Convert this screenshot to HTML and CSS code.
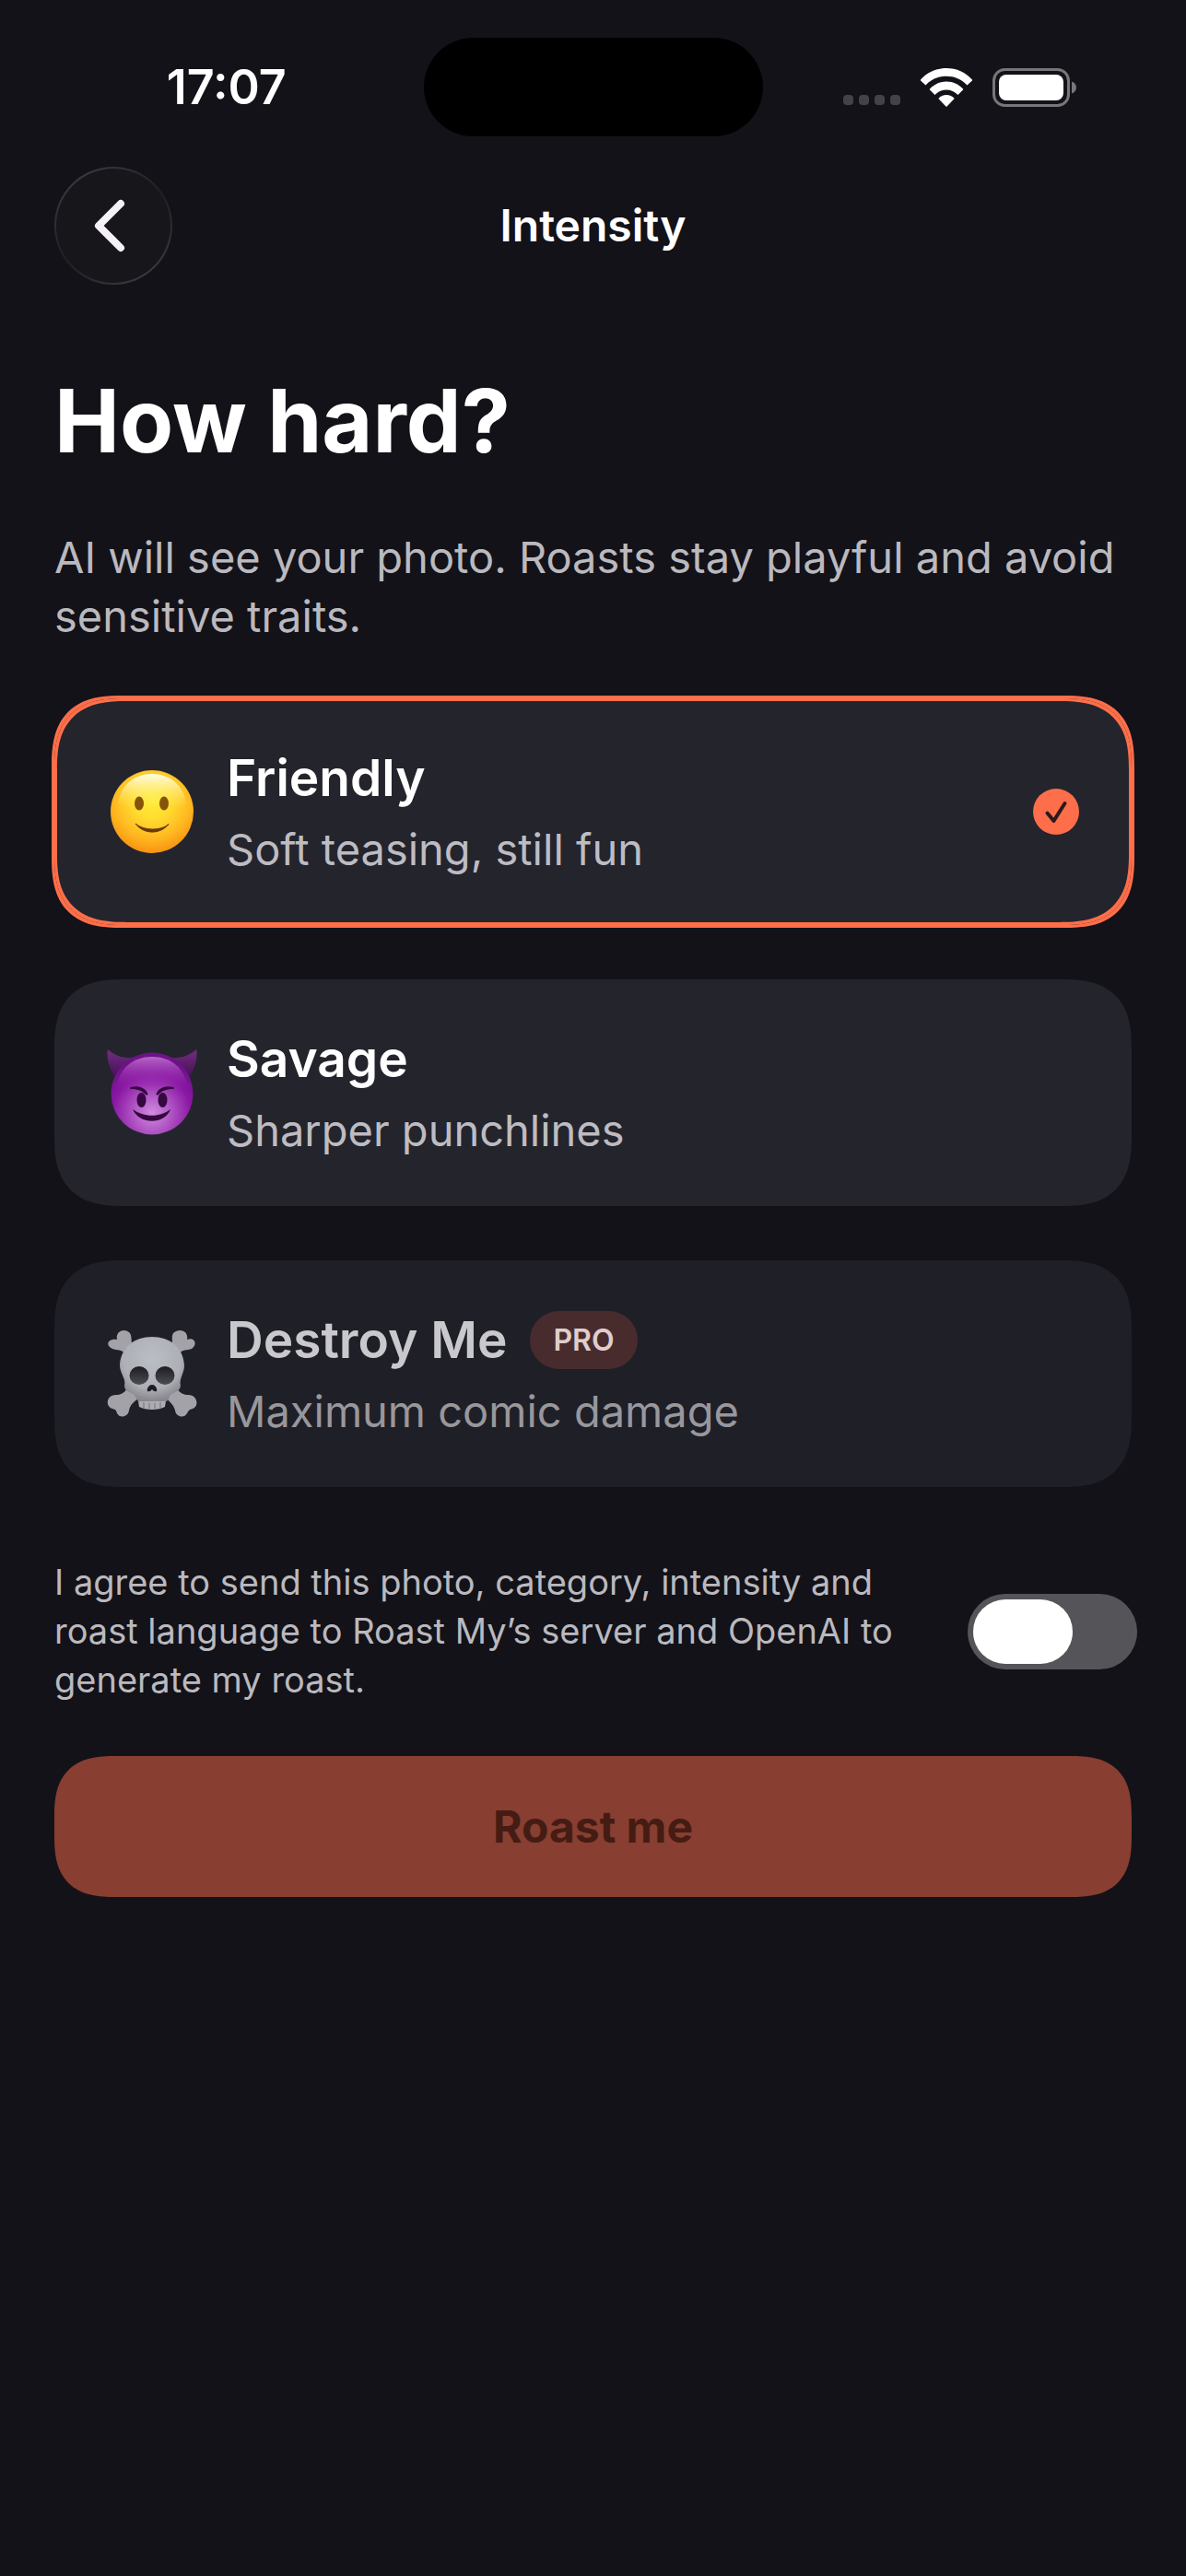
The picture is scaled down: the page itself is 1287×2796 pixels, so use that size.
FILE: index.html
```html
<!DOCTYPE html>
<html lang="en">
<head>
<meta charset="utf-8">
<meta name="viewport" content="width=device-width, initial-scale=1">
<title>Intensity</title>
<link rel="stylesheet" href="styles.css">
</head>
<body>
<div class="status">
  <time class="status-time">17:07</time>
  <div class="island"></div>
  <div class="status-icons">
    <span class="signal"><i></i><i></i><i></i><i></i></span>
    <svg class="wifi" viewBox="0 0 56 42" aria-hidden="true">
      <g fill="#fff">
        <path d="M28 0C39 0 49 4.500 56 12.500Q56.500 13 56 13.500L50.500 18.500C44.500 12 36.500 8.800 28 8.800S11.500 12 5.500 18.500L0 13.500Q-.5 13 0 12.500C7 4.500 17 0 28 0Z"/>
        <path d="M28 14.500C35.500 14.500 41.500 17.500 46 22.500Q46.500 23 46 23.500L40.500 29C37 25.500 32.800 23.500 28 23.500S19 25.500 15.500 29L10 23.500Q9.500 23 10 22.500C14.500 17.500 20.500 14.500 28 14.500Z"/>
        <path d="M28 29C31.500 29 34.200 30.200 36.300 32.500Q36.700 33 36.200 33.600L28.600 41.500Q28 42 27.400 41.500L19.800 33.600Q19.300 33 19.700 32.500C21.800 30.200 24.500 29 28 29Z"/>
      </g>
    </svg>
    <svg class="battery" viewBox="0 0 92 42" aria-hidden="true">
      <rect x="1.500" y="1.500" width="81" height="39" rx="12" fill="none" stroke="#77767b" stroke-width="3"/>
      <rect x="7" y="7" width="70" height="28" rx="8" fill="#fff"/>
      <path d="M86 14.500C89 15.500 91 18 91 21S89 26.500 86 27.500Z" fill="#77767b"/>
    </svg>
  </div>
</div>
<header class="nav">
  <button class="back" type="button" aria-label="Back">
    <svg viewBox="0 0 40 60" aria-hidden="true"><path d="M32 6L8 30L32 54" fill="none" stroke="#f4f2f8" stroke-width="8" stroke-linecap="round" stroke-linejoin="round"/></svg>
  </button>
  <p class="nav-title">Intensity</p>
</header>
<main class="content">
  <h1>How hard?</h1>
  <p class="intro">AI will see your photo. Roasts stay playful and avoid sensitive traits.</p>
  <div class="options">
    <button class="option selected" type="button" aria-pressed="true">
      <svg class="emoji" viewBox="0 0 98 98" aria-hidden="true">
        <defs>
          <radialGradient id="sunGlow" cx=".5" cy=".36" r=".66"><stop offset="0" stop-color="#ffec38"/><stop offset=".35" stop-color="#ffdc30"/><stop offset=".7" stop-color="#ffb820"/><stop offset="1" stop-color="#f58f11"/></radialGradient>
          <linearGradient id="sunTop" x1="0" y1="0" x2="0" y2="1"><stop offset="0" stop-color="#fffde8"/><stop offset="1" stop-color="#ffee58" stop-opacity="0"/></linearGradient>
        </defs>
        <circle cx="49" cy="49" r="45" fill="url(#sunGlow)"/>
        <path d="M12 40C15 20 30 8 49 8S83 20 86 40C74 48 24 48 12 40Z" fill="url(#sunTop)"/>
        <ellipse cx="35" cy="40" rx="5" ry="7.500" fill="#85540a"/>
        <ellipse cx="62" cy="40" rx="5" ry="7.500" fill="#85540a"/>
        <path d="M31 62C40 74 58 74 67 62.500C59 70 40 70 31 62Z" fill="#6b3a08" stroke="#6b3a08" stroke-width="1" stroke-linejoin="round"/>
      </svg>
      <span class="option-text">
        <span class="option-title">Friendly</span>
        <span class="option-note">Soft teasing, still fun</span>
      </span>
      <svg class="tick" viewBox="0 0 50 50" aria-hidden="true"><circle cx="25" cy="25" r="25" fill="#ff6e4a"/><path d="M15.500 26.500L22.500 35L34.500 16" fill="none" stroke="#2b1a1c" stroke-width="4" stroke-linecap="round" stroke-linejoin="round"/></svg>
    </button>
    <button class="option" type="button" aria-pressed="false">
      <svg class="emoji" viewBox="0 0 98 98" aria-hidden="true">
        <defs>
          <radialGradient id="impBase" cx=".5" cy=".74" r=".66"><stop offset="0" stop-color="#d08be0"/><stop offset=".35" stop-color="#b055c4"/><stop offset=".72" stop-color="#8a18a4"/><stop offset="1" stop-color="#6f1289"/></radialGradient>
          <linearGradient id="impTop" x1="0" y1="0" x2="0" y2="1"><stop offset="0" stop-color="#b968c8"/><stop offset="1" stop-color="#8e0fa8" stop-opacity="0"/></linearGradient>
          <linearGradient id="impHorn" x1="0" y1="0" x2="0" y2="1"><stop offset="0" stop-color="#6f2f7d"/><stop offset="1" stop-color="#4b0f5c"/></linearGradient>
        </defs>
        <path d="M1 2C9 9 18 12 29 11L8 31C2 21-1 10 1 2Z" fill="url(#impHorn)"/>
        <path d="M97 2C89 9 80 12 69 11L90 31C96 21 99 10 97 2Z" fill="url(#impHorn)"/>
        <circle cx="49" cy="50" r="44.500" fill="url(#impBase)"/>
        <path d="M11 41C14 22 29 10 49 10S84 22 87 41C75 50 23 50 11 41Z" fill="url(#impTop)"/>
        <g fill="#35083f">
          <path d="M26 43C32 41 42 43 44.500 50.500Q44 52.500 42 51C38 46.500 32 45 26 45Q24 44 26 43Z"/>
          <path d="M72 43C66 41 56 43 53.500 50.500Q54 52.500 56 51C60 46.500 66 45 72 45Q74 44 72 43Z"/>
          <ellipse cx="37.500" cy="57" rx="5" ry="8"/>
          <ellipse cx="60.500" cy="57" rx="5" ry="8"/>
          <path d="M28 67C40 76 58 76 69 67C63 84 35 84 28 67Z"/>
        </g>
      </svg>
      <span class="option-text">
        <span class="option-title">Savage</span>
        <span class="option-note">Sharper punchlines</span>
      </span>
    </button>
    <button class="option locked" type="button" aria-pressed="false">
      <svg class="emoji" viewBox="0 0 98 98" aria-hidden="true">
        <defs>
          <radialGradient id="bone" cx=".5" cy=".35" r=".65"><stop offset="0" stop-color="#eef4fa"/><stop offset=".7" stop-color="#dde0e6"/><stop offset="1" stop-color="#aaa8b0"/></radialGradient>
          <linearGradient id="socket" x1="0" y1="0" x2="0" y2="1"><stop offset="0" stop-color="#1b1b20"/><stop offset="1" stop-color="#5c5c62"/></linearGradient>
        </defs>
        <g fill="#cfced5">
          <path d="M11 12C9 2 20-1 25 5C28 10 25 15 29 18L20 28C16 22 11 24 6 22C-3 18 2 10 11 12Z"/>
          <path d="M87 12C89 2 78-1 72 5C69 10 73 15 69 18L78 28C82 22 87 24 92 22C99 17 95 9 87 12Z"/>
          <path d="M10 72C-1 72-2 85 6 87C10 88 10 89 11 92C14 98 23 96 24 89C25 81 33 78 36 73L22 65C18 71 14 72 10 72Z"/>
          <path d="M88 72C99 72 100 85 93 87C89 88 89 89 87 92C84 98 75 96 74 89C72 81 66 78 62 73L76 65C80 71 84 72 88 72Z"/>
        </g>
        <path d="M33 72L35 85Q41 88 49 88T63 85L65 72Z" fill="#dddce2"/>
        <path d="M49 9C68 9 83 20 84 40C84 49 78 54 80 62C79 70 71 68 68 74C66 80 64 79 60 79H38C34 79 33 79 31 74C28 68 19 70 19 62C21 54 14 49 14 40C15 20 30 9 49 9Z" fill="url(#bone)"/>
        <ellipse cx="35" cy="51" rx="10.500" ry="10" fill="url(#socket)"/>
        <ellipse cx="63" cy="51" rx="10.500" ry="10" fill="url(#socket)"/>
        <path d="M49 61C53 61 55 66 54 68Q51 69 49 66Q47 69 44 68C43 66 45 61 49 61Z" fill="#1d1c21"/>
        <path d="M40 80V86M46 81V87M52 81V87M58 80V86" stroke="#a9a7ae" stroke-width="1.500"/>
      </svg>
      <span class="option-text">
        <span class="option-title">Destroy Me <span class="badge">PRO</span></span>
        <span class="option-note">Maximum comic damage</span>
      </span>
    </button>
  </div>
  <div class="consent">
    <label for="agree">I agree to send this photo, category, intensity and roast language to Roast My’s server and OpenAI to generate my roast.</label>
    <input class="switch" id="agree" type="checkbox" role="switch">
  </div>
  <button class="submit" type="button" disabled>Roast me</button>
</main>
</body>
</html>
```
FILE: styles.css
```css
* { box-sizing: border-box; }

body {
  margin: 0;
  min-height: 100vh;
  background: #131218;
  color: #fff;
  font-family: Inter, "Liberation Sans", sans-serif;
}

h1, p { margin: 0; }

button {
  border: 0;
  padding: 0;
  font: inherit;
  color: inherit;
}

.status {
  display: grid;
  grid-template-columns: 1fr 368px 1fr;
  padding-top: 41px;
  height: 148px;
}

.status-time {
  align-self: center;
  justify-self: center;
  padding-left: 32px;
  font-size: 52px;
  font-weight: 600;
  line-height: 60px;
}

.island {
  border-radius: 54px;
  background: #000;
}

.status-icons {
  display: flex;
  align-items: center;
  justify-content: flex-end;
  gap: 22px;
  padding-right: 118px;
}

.signal {
  display: flex;
  gap: 6px;
  align-self: flex-end;
  padding-bottom: 34px;
}

.signal i {
  width: 11px;
  height: 11px;
  border-radius: 4px;
  background: #434247;
}

.wifi { width: 56px; height: 42px; }
.battery { width: 92px; height: 42px; }

.nav {
  display: grid;
  grid-template-columns: 128px 1fr 128px;
  align-items: center;
  padding: 33px 59px 0;
}

.back {
  display: flex;
  align-items: center;
  justify-content: center;
  height: 128px;
  padding-right: 8px;
  border: 2px solid transparent;
  border-radius: 50%;
  background:
    linear-gradient(#17161b, #17161b) padding-box,
    linear-gradient(145deg, #434248, #222127 45%, #222127 55%, #434248) border-box;
}

.back svg { width: 40px; height: 60px; }

.nav-title {
  text-align: center;
  font-size: 48px;
  font-weight: 600;
  line-height: 60px;
}

.content { padding: 84px 59px 120px; }

h1 {
  font-size: 95px;
  font-weight: 700;
  line-height: 128px;
}

.intro {
  margin-top: 52px;
  color: #bab9bf;
  font-size: 47px;
  line-height: 64px;
}

.options {
  display: flex;
  flex-direction: column;
  gap: 59px;
  margin-top: 57px;
}

.option {
  display: flex;
  align-items: center;
  min-height: 246px;
  padding: 0 57px;
  border-radius: 60px;
  background: #24242c;
  text-align: left;
}

.selected { box-shadow: 0 0 0 3px #ff6e4a, inset 0 0 0 3px #ff6e4a; }
.locked { background: #1f1f27; }
.locked .emoji { opacity: 0.75; }
.locked .option-title { color: #c9c8cd; }
.locked .option-note { color: #98979c; }

.emoji { width: 98px; height: 98px; }

.option-text {
  display: flex;
  flex: 1;
  flex-direction: column;
  gap: 10px;
  padding-left: 32px;
}

.option-title {
  display: flex;
  align-items: center;
  gap: 25px;
  font-size: 55px;
  font-weight: 600;
  line-height: 72px;
}

.option-note {
  color: #bdbcc2;
  font-size: 47px;
  line-height: 64px;
}

.badge {
  padding: 0 25px;
  border-radius: 32px;
  background: #482c2d;
  color: #e0cdcd;
  font-size: 32px;
  font-weight: 600;
  line-height: 63px;
}

.tick { width: 50px; height: 50px; }

.consent {
  display: flex;
  align-items: center;
  justify-content: space-between;
  gap: 60px;
  margin-top: 77px;
  color: #bab9bf;
  font-size: 38px;
  line-height: 53px;
}

.consent label { flex: 1; }

.switch {
  appearance: none;
  flex: none;
  width: 184px;
  height: 82px;
  margin: 0 -6px 0 0;
  padding: 6px;
  border-radius: 41px;
  background: #555459;
}

.switch::before {
  content: "";
  display: block;
  width: 108px;
  height: 70px;
  border-radius: 35px;
  background: #fff;
}

.switch:checked { background: #ff6e4a; }
.switch:checked::before { margin-left: auto; }

.submit {
  display: block;
  width: 100%;
  height: 153px;
  margin-top: 56px;
  border-radius: 50px;
  background: #883e30;
  color: #441c14;
  font-size: 48px;
  font-weight: 700;
}

@supports (corner-shape: superellipse(1.4)) {
  .option {
    border-radius: 76px;
    corner-shape: superellipse(1.4);
  }

  .submit {
    border-radius: 66px;
    corner-shape: superellipse(1.4);
  }
}
```
